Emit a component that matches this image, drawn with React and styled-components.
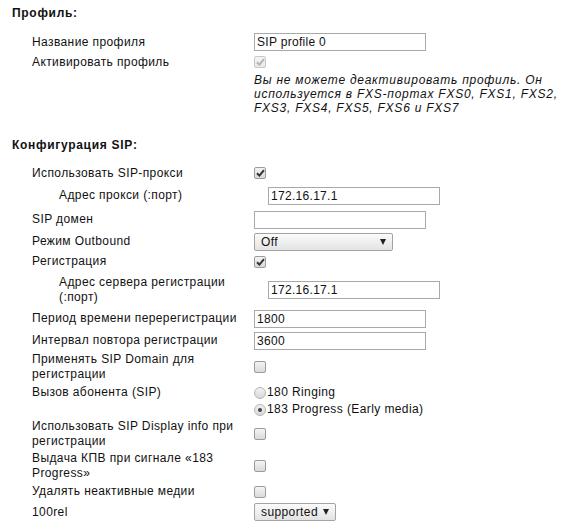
import React from "react";
import styled, { createGlobalStyle } from "styled-components";

const Global = createGlobalStyle`
  html, body { margin: 0; padding: 0; background: #fff; }
  body { font-family: "Liberation Sans", Arial, sans-serif; font-size: 12px; color: #111; letter-spacing: 0.4px; }
`;

const Page = styled.div`
  padding: 3px 0 0 12px;
  width: 555px;
`;

const Title = styled.div`
  font-weight: bold;
  font-size: 12px;
  letter-spacing: 0.7px;
  line-height: 20px;
  margin-top: ${(p) => p.$mt || 0}px;
  margin-bottom: ${(p) => p.$mb || 0}px;
`;

const Row = styled.div`
  display: grid;
  grid-template-columns: 222px 1fr;
  align-items: ${(p) => (p.$top ? "start" : "center")};
  height: ${(p) => p.$h}px;
  padding-left: 20px;
  padding-top: ${(p) => p.$pt || 0}px;
  margin-top: ${(p) => p.$mt || 0}px;
  box-sizing: border-box;
`;

const Label = styled.div`
  padding-left: ${(p) => (p.$indent ? 27 : 0)}px;
  padding-right: 4px;
  line-height: ${(p) => p.$lh || 15}px;
`;

const Value = styled.div`
  display: flex;
  flex-direction: column;
  align-items: flex-start;
  padding-left: ${(p) => (p.$indent ? 14 : 0)}px;
`;

const TextInput = styled.input`
  box-sizing: border-box;
  width: 172px;
  height: 18px;
  margin: 0;
  padding: 0 2px;
  border: 1px solid #a9a9a9;
  font-family: "Liberation Sans", Arial, sans-serif;
  font-size: 12px;
  letter-spacing: 0.3px;
  color: #111;
  background: #fff;
  outline: none;
`;

const SelectBox = styled.div`
  box-sizing: border-box;
  width: ${(p) => p.$w}px;
  height: 18px;
  border: 1px solid #a3a3a3;
  border-radius: 2px;
  background: linear-gradient(#fbfbfb, #e3e3e3);
  display: flex;
  align-items: center;
  justify-content: space-between;
  padding: 0 6px 0 6px;
  font-size: 12px;
  color: #111;
`;

const Arrow = styled.span`
  width: 0;
  height: 0;
  border-left: 3px solid transparent;
  border-right: 3px solid transparent;
  border-top: 6px solid #222;
`;

const Box = styled.span`
  box-sizing: border-box;
  width: 12px;
  height: 12px;
  border: 1px solid ${(p) => (p.$disabled ? "#c8c8c8" : "#9c9c9c")};
  border-radius: 2px;
  background: ${(p) =>
    p.$disabled ? "linear-gradient(#f4f4f4, #e9e9e9)" : "linear-gradient(#f3f3f3, #dadada)"};
  display: inline-flex;
  align-items: center;
  justify-content: center;
`;

const Check = ({ checked, disabled }) => (
  <Box $disabled={disabled}>
    {checked && (
      <svg width="9" height="8" viewBox="0 0 9 8">
        <path
          d="M1 4.2 L3.4 6.6 L8 1.2"
          fill="none"
          stroke={disabled ? "#b4b4b4" : "#333"}
          strokeWidth="2"
        />
      </svg>
    )}
  </Box>
);

const RadioLine = styled.label`
  display: flex;
  align-items: center;
  line-height: 17px;
  height: 17px;
`;

const RadioDot = styled.span`
  box-sizing: border-box;
  width: 12px;
  height: 12px;
  border-radius: 50%;
  border: 1px solid #b5b5b5;
  background: linear-gradient(#f2f2f2, #d9d9d9);
  display: inline-flex;
  align-items: center;
  justify-content: center;
  margin-right: 1px;
  &::after {
    content: "";
    width: 4px;
    height: 4px;
    border-radius: 50%;
    background: ${(p) => (p.$on ? "#444" : "transparent")};
  }
`;

const Note = styled.div`
  padding-left: 242px;
  font-style: italic;
  letter-spacing: 0.75px;
  line-height: 14px;
  margin-top: 1px;
  width: 305px;
`;

export default function App() {
  return (
    <Page>
      <Global />
      <Title $mb={9}>Профиль:</Title>
      <Row $h={20}>
        <Label>Название профиля</Label>
        <Value><TextInput defaultValue="SIP profile 0" /></Value>
      </Row>
      <Row $h={20}>
        <Label>Активировать профиль</Label>
        <Value><Check checked disabled /></Value>
      </Row>
      <Note>
        Вы не можете деактивировать профиль. Он используется в FXS-портах FXS0, FXS1, FXS2,
        FXS3, FXS4, FXS5, FXS6 и FXS7
      </Note>

      <Title $mt={20}>Конфигурация SIP:</Title>
      <Row $h={20} $mt={8}>
        <Label>Использовать SIP-прокси</Label>
        <Value><Check checked /></Value>
      </Row>
      <Row $h={25}>
        <Label $indent>Адрес прокси (:порт)</Label>
        <Value $indent><TextInput defaultValue="172.16.17.1" /></Value>
      </Row>
      <Row $h={23}>
        <Label>SIP домен</Label>
        <Value><TextInput defaultValue="" /></Value>
      </Row>
      <Row $h={21}>
        <Label>Режим Outbound</Label>
        <Value>
          <SelectBox $w={139}>Off<Arrow /></SelectBox>
        </Value>
      </Row>
      <Row $h={19}>
        <Label>Регистрация</Label>
        <Value><Check checked /></Value>
      </Row>
      <Row $h={37}>
        <Label $indent>Адрес сервера регистрации (:порт)</Label>
        <Value $indent><TextInput defaultValue="172.16.17.1" /></Value>
      </Row>
      <Row $h={21}>
        <Label>Период времени перерегистрации</Label>
        <Value><TextInput defaultValue="1800" /></Value>
      </Row>
      <Row $h={23}>
        <Label>Интервал повтора регистрации</Label>
        <Value><TextInput defaultValue="3600" /></Value>
      </Row>
      <Row $h={29}>
        <Label>Применять SIP Domain для регистрации</Label>
        <Value><Check /></Value>
      </Row>
      <Row $h={37} $top $pt={3}>
        <Label $lh={17}>Вызов абонента (SIP)</Label>
        <Value>
          <RadioLine><RadioDot />180 Ringing</RadioLine>
          <RadioLine><RadioDot $on />183 Progress (Early media)</RadioLine>
        </Value>
      </Row>
      <Row $h={32}>
        <Label>Использовать SIP Display info при регистрации</Label>
        <Value><Check /></Value>
      </Row>
      <Row $h={32}>
        <Label>Выдача КПВ при сигнале «183 Progress»</Label>
        <Value><Check /></Value>
      </Row>
      <Row $h={19}>
        <Label>Удалять неактивные медии</Label>
        <Value><Check /></Value>
      </Row>
      <Row $h={22}>
        <Label>100rel</Label>
        <Value>
          <SelectBox $w={82}>supported<Arrow /></SelectBox>
        </Value>
      </Row>
    </Page>
  );
}
